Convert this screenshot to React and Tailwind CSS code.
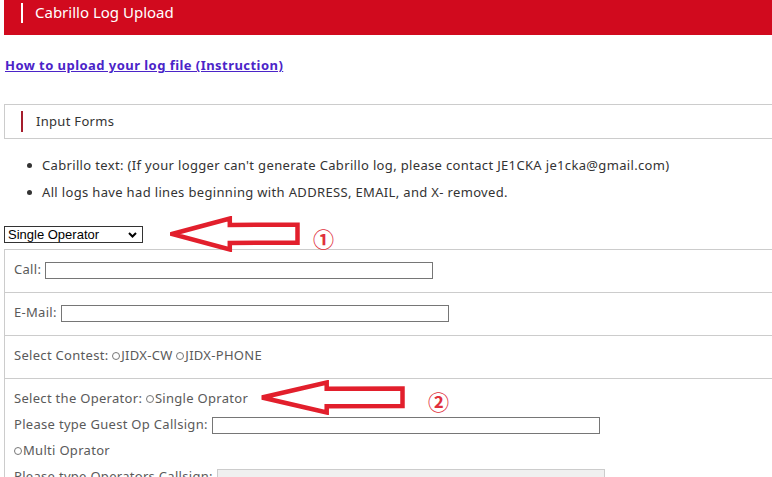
import React from "react";

const font = { fontFamily: '"Noto Sans", "Liberation Sans", sans-serif' };

// left-pointing outlined arrow used as annotation
const Arrow = ({ className, w, h }) => (
  <svg className={className} width={w} height={h} viewBox={`0 0 ${w} ${h}`} fill="none">
    <path
      d={`M2 ${h / 2} L${w * 0.46} 2.5 L${w * 0.46} ${h * 0.25} L${w - 2.5} ${h * 0.24} L${w - 2.5} ${h * 0.74} L${w * 0.46} ${h * 0.75} L${w * 0.46} ${h - 2.5} Z`}
      stroke="#e21f2c"
      strokeWidth="4.5"
      strokeLinejoin="miter"
    />
  </svg>
);

const TextBox = ({ w, disabled }) => (
  <span
    className={`inline-block h-[17px] align-middle border ${
      disabled ? "border-[#ccc] bg-[#f0f0f0]" : "border-[#767676] bg-white"
    }`}
    style={{ width: w }}
  />
);

const Radio = () => (
  <span className="inline-block w-[8px] h-[8px] rounded-full border border-[#777] mr-[1px]" />
);

const App = () => {
  return (
    <div className="relative w-[772px] h-[477px] overflow-hidden bg-white pl-1" style={font}>
      {/* header */}
      <div className="flex items-center h-[35px] bg-[#d10a1e] text-white">
        <span className="ml-[17px] w-[2px] h-[20px] bg-white mb-[10px]" />
        <span className="ml-[12px] text-[15px] leading-none mb-[10px]">Cabrillo Log Upload</span>
      </div>

      <div className="mt-[17px] ml-[1px]">
        <a href="#" className="text-[13px] font-bold underline text-[#4b24c8] tracking-[0.45px]">
          How to upload your log file (Instruction)
        </a>
      </div>

      {/* section title */}
      <div className="mt-[28px] flex items-center h-[35px] border border-[#ccc] border-r-0">
        <span className="ml-[16px] w-[2px] h-[21px] bg-[#a51d2c]" />
        <span className="ml-[13px] text-[13px] text-[#333] tracking-[0.3px]">Input Forms</span>
      </div>

      <ul className="mt-[17px] ml-[23px] text-[13px] text-[#333] flex flex-col gap-[7px] tracking-[0.34px]">
        <li className="flex items-center gap-[10px]">
          <span className="w-[5px] h-[5px] rounded-full bg-[#333]" />
          Cabrillo text: (If your logger can't generate Cabrillo log, please contact JE1CKA je1cka@gmail.com)
        </li>
        <li className="flex items-center gap-[10px]">
          <span className="w-[5px] h-[5px] rounded-full bg-[#333]" />
          All logs have had lines beginning with ADDRESS, EMAIL, and X- removed.
        </li>
      </ul>

      {/* operator select */}
      <div className="mt-[24px] flex items-center">
        <div
          className="w-[139px] h-[17px] border border-[#333] flex items-center justify-between px-[3px] text-[13px] text-black"
          style={{ fontFamily: '"Liberation Sans", Arial, sans-serif' }}
        >
          <span>Single Operator</span>
          <svg width="9" height="6" viewBox="0 0 9 6" className="mr-[2px]">
            <path d="M1 1 L4.5 4.5 L8 1" stroke="#000" strokeWidth="2" fill="none" />
          </svg>
        </div>
      </div>

      {/* form table */}
      <div className="mt-[6px] border-l border-t border-[#ccc] text-[13px] text-[#5a5a5a] tracking-[0.3px]">
        <div className="h-[43px] flex items-center gap-[4px] pl-[9px] border-b border-[#ccc] pb-[2px]">
          Call: <TextBox w={388} />
        </div>
        <div className="h-[43px] flex items-center gap-[4px] pl-[9px] border-b border-[#ccc] pb-[2px]">
          E-Mail: <TextBox w={388} />
        </div>
        <div className="h-[43px] flex items-center pl-[9px] border-b border-[#ccc] pb-[2px]">
          Select Contest:&nbsp;<Radio />JIDX-CW&nbsp;<Radio />JIDX-PHONE
        </div>
        <div className="pl-[9px] pt-[11px] flex flex-col gap-[8px]">
          <div className="h-[18px] flex items-center">
            Select the Operator:&nbsp;<Radio />Single Oprator
          </div>
          <div className="h-[18px] flex items-center gap-[4px]">
            Please type Guest Op Callsign: <TextBox w={388} />
          </div>
          <div className="h-[18px] flex items-center">
            <Radio />Multi Oprator
          </div>
          <div className="h-[18px] flex items-center gap-[4px]">
            Please type Operators Callsign: <TextBox w={388} disabled />
          </div>
        </div>
      </div>

      {/* annotations */}
      <Arrow className="absolute left-[170px] top-[216px]" w={130} h={36} />
      <span
        className="absolute left-[313px] top-[223px] text-[21px] font-bold text-[#e0303c]"
        style={{ fontFamily: '"Noto Sans CJK JP", sans-serif' }}
      >
        ①
      </span>
      <Arrow className="absolute left-[260px] top-[380px]" w={145} h={35} />
      <span
        className="absolute left-[428px] top-[386px] text-[21px] font-bold text-[#e0303c]"
        style={{ fontFamily: '"Noto Sans CJK JP", sans-serif' }}
      >
        ②
      </span>
    </div>
  );
};

export default App;
